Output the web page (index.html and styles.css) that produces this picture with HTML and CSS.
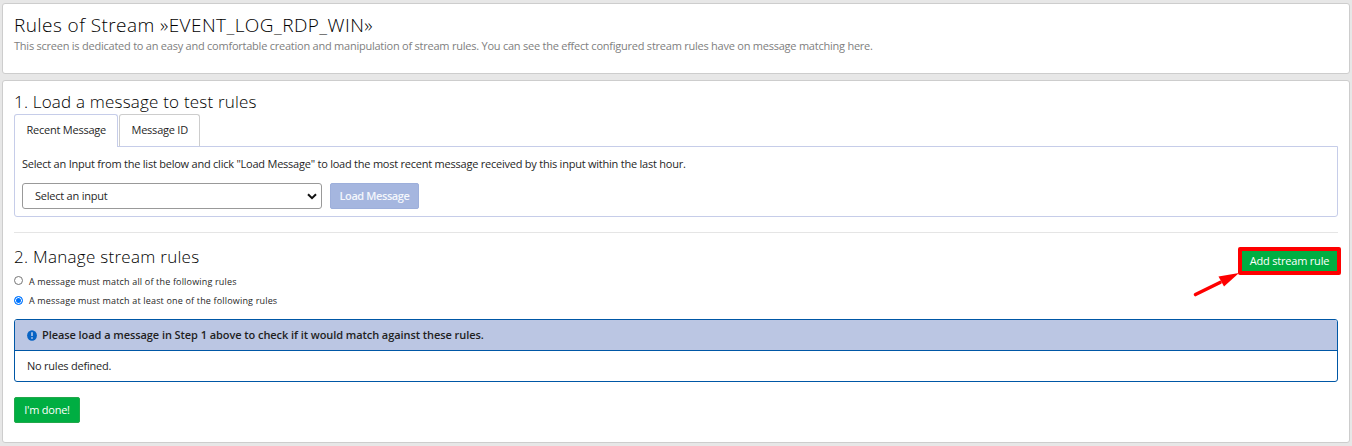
FILE: index.html
```html
<!DOCTYPE html>
<html lang="en">
<head>
<meta charset="utf-8">
<title>Rules of Stream</title>
<link rel="stylesheet" href="styles.css">
</head>
<body>
<header class="card header">
  <h1 class="title"><span>Rules of Stream »EVENT_LOG_RDP_WIN»</span></h1>
  <p class="subtitle"><span>This screen is dedicated to an easy and comfortable creation and manipulation of stream rules. You can see the effect configured stream rules have on message matching here.</span></p>
</header>
<main class="card main">
  <h2 class="heading"><span>1. Load a message to test rules</span></h2>
  <nav class="tabs">
    <a class="tab active">Recent Message</a>
    <a class="tab other">Message ID</a>
  </nav>
  <section class="pane">
    <p class="help"><span>Select an Input from the list below and click "Load Message" to load the most recent message received by this input within the last hour.</span></p>
    <div class="row">
      <div class="select"><span>Select an input</span>
        <svg width="10" height="7" viewBox="0 0 10 7"><path d="M1 1.200l4 4 4-4" fill="none" stroke="#111" stroke-width="2"/></svg>
      </div>
      <button class="btn load">Load Message</button>
    </div>
  </section>
  <hr class="rule">
  <div class="manage">
    <div>
      <h2 class="heading second"><span>2. Manage stream rules</span></h2>
      <label class="option"><i class="radio"></i><span>A message must match all of the following rules</span></label>
      <label class="option"><i class="radio checked"></i><span>A message must match at least one of the following rules</span></label>
    </div>
    <div class="callout">
      <button class="btn add">Add stream rule</button>
      <svg class="arrow" width="48" height="28" viewBox="0 0 48 28"><path d="M3.500 22.500L28 10.500" stroke="#fe0000" stroke-width="3.600" stroke-linecap="round"/><path d="M47 1L26.500 4.500L32 14.500Z" fill="#fe0000"/></svg>
    </div>
  </div>
  <section class="panel">
    <div class="panel-head">
      <svg width="10" height="11" viewBox="0 0 10 11"><ellipse cx="5" cy="5.500" rx="4.900" ry="5.300" fill="#0763c4"/><path d="M5 2.300v3.800M5 7.300v1.500" stroke="#c5d3ee" stroke-width="1.500"/></svg>
      <span>Please load a message in Step 1 above to check if it would match against these rules.</span>
    </div>
    <div class="panel-body"><span>No rules defined.</span></div>
  </section>
  <button class="btn done">I'm done!</button>
</main>
</body>
</html>
```
FILE: styles.css
```css
* { box-sizing: border-box; }
body {
  margin: 0;
  height: 446px;
  padding: 3px 2px;
  overflow: hidden;
  background: #e7e7e7;
  color: #1f1f1f;
  font: 11px/16px "Open Sans", sans-serif;
  letter-spacing: -0.23px;
}
h1, h2, p { margin: 0; white-space: nowrap; }
.card {
  background: #fff;
  border: 1px solid #cdcdcd;
  border-radius: 3px;
  padding: 0 11px;
}
.header { height: 71px; margin-bottom: 6px; padding-top: 9px; }
.main { height: 363px; padding-top: 9px; }
.title { color: #000; font-size: 19px; line-height: 25px; font-weight: 300; letter-spacing: 0.43px; }
.subtitle { color: #808080; letter-spacing: -0.235px; }
.heading { color: #000; font-size: 17px; line-height: 24px; font-weight: 300; letter-spacing: 0.2px; }
.tabs { display: flex; gap: 1px; height: 32px; }
.tab {
  height: 32px;
  padding: 7px 11.5px;
  border: 1px solid #c6cde9;
  border-bottom: 0;
  border-radius: 3px 3px 0 0;
  white-space: nowrap;
}
.active { width: 104px; height: 33px; background: #fff; position: relative; }
.other { width: 81px; border-color: #cdcdcd; }
.pane {
  height: 71px;
  border: 1px solid #c6cde9;
  border-radius: 0 0 3px 3px;
  padding: 9px 7px;
}
.row { display: flex; gap: 8px; margin-top: 11px; }
.select {
  display: flex;
  align-items: center;
  justify-content: space-between;
  width: 300px;
  height: 26px;
  padding: 0 4px 0 12px;
  border: 1px solid #999;
  border-radius: 3px;
}
.btn {
  height: 26px;
  padding: 0;
  border: 1px solid #21a84a;
  border-radius: 2px;
  background: #00ae42;
  color: #fff;
  font: 11px/16px "Open Sans", sans-serif;
  letter-spacing: -0.25px;
  white-space: nowrap;
}
.load { width: 89px; background: #a5b6df; border-color: #9dafdb; color: #f4f6fc; font-weight: 600; letter-spacing: -0.4px; }
.rule { margin: 15px 0 0; height: 1px; border: 0; background: #e5e5e5; }
.manage { display: flex; justify-content: space-between; height: 86px; }
.second { margin-top: 12px; margin-bottom: 3px; letter-spacing: 0.28px; }
.option { display: flex; align-items: center; gap: 6px; height: 19px; font-size: 9px; letter-spacing: 0.17px; white-space: nowrap; }
.radio { width: 9px; height: 9px; margin-bottom: 2px; border: 1px solid #767676; border-radius: 50%; }
.checked { margin-bottom: 1px; border-color: #0075ff; background: #0075ff; box-shadow: inset 0 0 0 1px #fff; }
.callout { position: relative; margin: 14px -3px 0 0; }
.add { display: block; width: 103px; height: 28px; border: 4px solid #fe0000; border-radius: 2px; letter-spacing: -0.2px; }
.arrow { position: absolute; right: 101px; top: 25px; }
.panel { height: 63px; border: 1px solid #0057a6; border-radius: 3px; overflow: hidden; }
.panel-head {
  display: flex;
  align-items: center;
  gap: 5px;
  height: 31px;
  padding-left: 12px;
  border-bottom: 1px solid #0057a6;
  background: #bbc6e3;
  font-weight: 600;
  letter-spacing: -0.07px;
}
.panel-body { padding: 7px 12px; }
.done { display: block; width: 66px; margin-top: 15px; }
```
